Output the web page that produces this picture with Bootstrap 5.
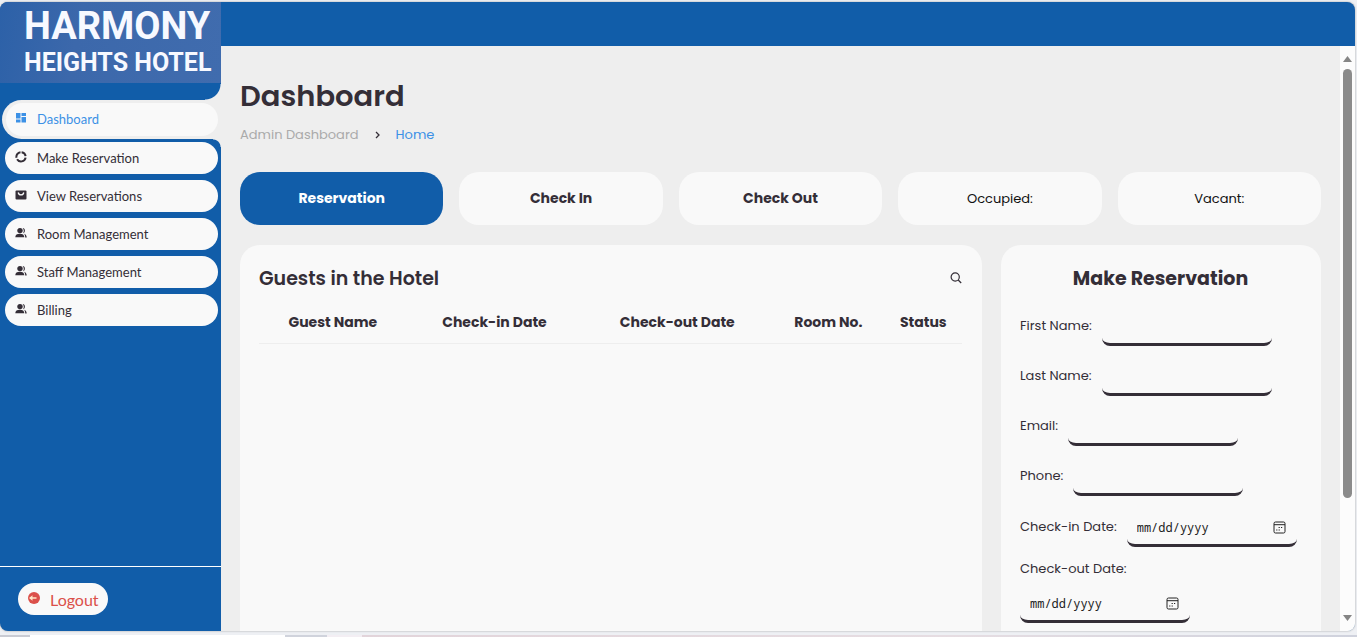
<!DOCTYPE html>
<html lang="en">
<head>
<meta charset="utf-8">
<meta name="viewport" content="width=device-width, initial-scale=1">
<title>Harmony Heights Hotel - Dashboard</title>
<link href="https://cdn.jsdelivr.net/npm/bootstrap@5.3.0/dist/css/bootstrap.min.css" rel="stylesheet">
<style>
:root { --blue:#115da9; --grey:#eee; --light:#f9f9f9; --dark:#342e37; --link:#3c91e6; --red:#db504a; }
body { font-family:Poppins, Inter, "Open Sans", sans-serif; font-size:13px; color:var(--dark); background:#eef0f4; }
.frame { flex:1; min-height:0; border-radius:8px; overflow:hidden; background:var(--blue); box-shadow:0 0 2px #999; }
.page { padding:2px 2px 0 0; }
.desk { height:2px; margin:4px -2px 0 0; background:linear-gradient(90deg,#c9cbd3 30px,#fff 30px,#fff 285px,#d0d3dc 285px,#d0d3dc 327px,#f3eef3 327px,#f3eef3 362px,#e2d4da 362px,#e6dde2 70%,#cfd2dd); }
.side { width:221px; flex:none; }
.logo { height:81px; padding-left:24px; color:#f7f9ff; background:linear-gradient(100deg,#2c61a8,#3c68ab 35%,#406cae); font-family:Roboto, "Open Sans", sans-serif; font-weight:700; text-decoration:none; }
.logo-top { font-size:38px; line-height:44px; padding-top:2px; }
.logo-sub { font-size:25px; line-height:29px; }
.menu { margin-top:17px; font-family:Lato, sans-serif; font-size:13px; gap:6px; }
.menu li { padding:0 3px 0 5px; }
.pill { height:32px; border-radius:32px; background:var(--light); color:var(--dark); text-decoration:none; padding:2px 10px 0; }
.pill svg { width:12px; height:12px; margin-right:10px; }
.menu .pill svg { margin-bottom:4px; }
.menu .current { position:relative; margin:0 0 -3px 2px; padding:3px 3px 3px 4px; background:var(--grey); border-radius:20px 0 0 20px; }
.current .pill { color:var(--link); height:33px; padding:0 9px; }
.current::before, .current::after { content:""; position:absolute; right:0; }
.current::before { width:16px; height:16px; top:-16px; background:radial-gradient(circle at 0 0,transparent 15px,var(--grey) 16px); }
.current::after { width:8px; height:8px; bottom:-8px; background:radial-gradient(circle at 0 100%,transparent 7px,var(--grey) 8px); }
.exit { border-top:1px solid #fff; padding:16px 18px; font-family:Lato, sans-serif; font-size:16px; }
.exit .pill { color:var(--red); padding:2px 9px 0 10px; }
.topbar { height:44px; }
.work { background:var(--grey); min-height:0; }
.content-area { padding:32px 19px 0; overflow:hidden; }
h1 { font-size:29px; line-height:36px; font-weight:600; margin:0 0 12px; }
.crumbs { font-size:13px; line-height:18px; gap:15px; margin-bottom:28px; }
.crumbs span { color:#aaa; }
.crumbs a { color:var(--link); text-decoration:none; }
.tiles { gap:16px; margin-bottom:20px; }
.tile { flex:1 1 0; height:53px; border:0; padding:0; border-radius:20px; background:var(--light); color:var(--dark); font-size:14px; font-weight:700; }
.tile.on { background:var(--blue); color:#fff; }
.tile.plain { font-size:13px; font-weight:400; color:#111; }
.panels { gap:19px; }
.panel { background:var(--light); border-radius:20px; padding:20px 20px 30px 19px; min-width:0; }
.panel h2 { font-size:19px; line-height:28px; font-weight:600; margin:0; }
.book { flex:0 0 320px; }
.panel.book h2 { font-weight:700; text-align:center; margin-bottom:17px; }
.find { border:0; background:none; padding:0 0 4px; line-height:1; color:var(--dark); }
.guests { width:100%; table-layout:fixed; margin-top:14px; font-size:14px; }
.guests th { font-weight:700; line-height:28px; padding-bottom:7px; text-align:center; border-bottom:1px solid var(--grey); }
.field { gap:10px; height:36px; margin-bottom:14px; }
.field label, .stack label { line-height:16px; padding-top:8px; }
.line { width:170px; height:36px; border:0; border-bottom:3px solid #342e37; border-radius:8px; background:transparent; padding:0 11px 0 10px; font-family:"Noto Sans Mono","Liberation Mono",monospace; font-size:12px; color:#222; }
.line::-webkit-calendar-picker-indicator { width:13px; height:13px; padding:0; opacity:1; background:url("data:image/svg+xml,%3Csvg xmlns='http://www.w3.org/2000/svg' viewBox='0 0 13 13' fill='none' stroke='%23222'%3E%3Crect x='1' y='1' width='11' height='11' rx='1.5'/%3E%3Cpath d='M1 3.7h11M5.6 6.5h1.2M8 6.5h1.2M3.2 9h1.2M5.6 9h1.2'/%3E%3C/svg%3E") center/13px no-repeat; }
.field.dated { height:37px; padding-top:1px; }
.stack label { display:block; margin-bottom:10px; padding-top:0; }
.scroller { width:15px; flex:none; background:#fcfcfc; padding:10px 0; }
.scroller i { width:9px; flex:0 0 76%; border-radius:5px; background:#8b8b8b; margin-top:7px; }
</style>
</head>
<body>
<svg class="d-none" aria-hidden="true">
  <symbol id="people" viewBox="0 0 12 12"><circle cx="5" cy="3.600" r="2.700"/><path d="M.3 10.300C.3 7.800 2 6.800 4.800 6.800s4.500 1 4.500 3.500zM7.600.9c3 .2 3 4.600.5 5.400 1-1.600 1-3.800-.5-5.400zM9 6.700c1.900.6 2.700 1.900 2.700 3.800h-1.500c0-1.700-.2-2.700-1.200-3.800z"/></symbol>
</svg>
<div class="page d-flex flex-column vh-100 overflow-hidden">
  <div class="frame d-flex">
    <aside class="side d-flex flex-column">
      <a class="logo d-block" href="#"><div class="logo-top">HARMONY</div><div class="logo-sub text-nowrap">HEIGHTS HOTEL</div></a>
      <ul class="menu list-unstyled d-flex flex-column mb-auto">
        <li class="current"><a class="pill d-flex align-items-center" href="#"><svg viewBox="0 0 12 12" fill="currentColor"><path d="M1 1h4.500v5.500H1zM6.500 1H11v3H6.500zM1 7.500h4.500v3H1zM6.500 5H11v5.500H6.500z"/></svg>Dashboard</a></li>
        <li><a class="pill d-flex align-items-center" href="#"><svg viewBox="0 0 12 12" fill="none" stroke="currentColor" stroke-width="2"><path d="M6.600 1.200a4.600 4.600 0 0 1 4 4M10.600 6.600a4.600 4.600 0 0 1-8.500 1.600M1.500 6.800a4.600 4.600 0 0 1 4-5.600"/></svg>Make Reservation</a></li>
        <li><a class="pill d-flex align-items-center" href="#"><svg viewBox="0 0 12 12"><rect x=".5" y="1.500" width="11" height="9" rx="1" fill="currentColor"/><path d="M3.200 3.500C4 6.700 8 6.700 8.800 3.500" fill="none" stroke="#f9f9f9" stroke-width="1.300"/></svg>View Reservations</a></li>
        <li><a class="pill d-flex align-items-center" href="#"><svg fill="currentColor"><use href="#people"/></svg>Room Management</a></li>
        <li><a class="pill d-flex align-items-center" href="#"><svg fill="currentColor"><use href="#people"/></svg>Staff Management</a></li>
        <li><a class="pill d-flex align-items-center" href="#"><svg fill="currentColor"><use href="#people"/></svg>Billing</a></li>
      </ul>
      <div class="exit d-flex"><a class="pill d-flex align-items-center" href="#"><svg class="mb-1" viewBox="0 0 12 12"><circle cx="6" cy="6" r="6" fill="#db504a"/><path d="M1 6l3.500-2.800v2H8.500v1.600h-4v2z" fill="#ffe6c8"/></svg>Logout</a></div>
    </aside>
    <div class="d-flex flex-column flex-grow-1 overflow-hidden">
      <header class="topbar flex-shrink-0"></header>
      <div class="work d-flex flex-grow-1">
        <main class="content-area flex-grow-1">
          <h1>Dashboard</h1>
          <nav class="crumbs d-flex align-items-center" aria-label="breadcrumb"><span>Admin Dashboard</span><svg width="7" height="8" viewBox="0 0 7 8" fill="none" stroke="#342e37" stroke-width="1.300"><path d="M2 1l3 3-3 3"/></svg><a href="#">Home</a></nav>
          <div class="tiles d-flex">
            <button type="button" class="tile on">Reservation</button>
            <button type="button" class="tile">Check In</button>
            <button type="button" class="tile">Check Out</button>
            <div class="tile plain d-flex align-items-center justify-content-center">Occupied:</div>
            <div class="tile plain d-flex align-items-center justify-content-center">Vacant:</div>
          </div>
          <div class="panels d-flex">
            <section class="panel flex-grow-1">
              <div class="d-flex justify-content-between align-items-center"><h2>Guests in the Hotel</h2>
                <button type="button" class="find" aria-label="Search"><svg width="12" height="12" viewBox="0 0 12 12" fill="none" stroke="currentColor" stroke-width="1.200"><circle cx="5.200" cy="5" r="4.100"/><path d="M8.200 8l3 3"/></svg></button></div>
              <table class="guests">
                <colgroup><col style="width:21%"><col style="width:25%"><col style="width:27%"><col style="width:16%"><col style="width:11%"></colgroup>
                <thead><tr><th>Guest Name</th><th>Check-in Date</th><th>Check-out Date</th><th>Room No.</th><th>Status</th></tr></thead>
              </table>
            </section>
            <section class="panel book">
              <h2>Make Reservation</h2>
              <form>
                <div class="field d-flex"><label for="fn">First Name:</label><input class="line" id="fn" type="text"></div>
                <div class="field d-flex"><label for="ln">Last Name:</label><input class="line" id="ln" type="text"></div>
                <div class="field d-flex"><label for="em">Email:</label><input class="line" id="em" type="email"></div>
                <div class="field d-flex"><label for="ph">Phone:</label><input class="line" id="ph" type="tel"></div>
                <div class="field dated d-flex"><label for="ci">Check-in Date:</label><input class="line" id="ci" type="date"></div>
                <div class="stack"><label for="co">Check-out Date:</label><input class="line" id="co" type="date"></div>
              </form>
            </section>
          </div>
        </main>
        <div class="scroller d-flex flex-column align-items-center" aria-hidden="true">
          <svg width="9" height="6" class="flex-shrink-0"><path d="M0 6l4.500-6L9 6z" fill="#858585"/></svg>
          <i></i>
          <svg width="9" height="6" class="mt-auto flex-shrink-0"><path d="M0 0h9L4.500 6z" fill="#858585"/></svg>
        </div>
      </div>
    </div>
  </div>
  <div class="desk flex-shrink-0"></div>
</div>
<script src="https://cdn.jsdelivr.net/npm/bootstrap@5.3.0/dist/js/bootstrap.bundle.min.js"></script>
</body>
</html>
